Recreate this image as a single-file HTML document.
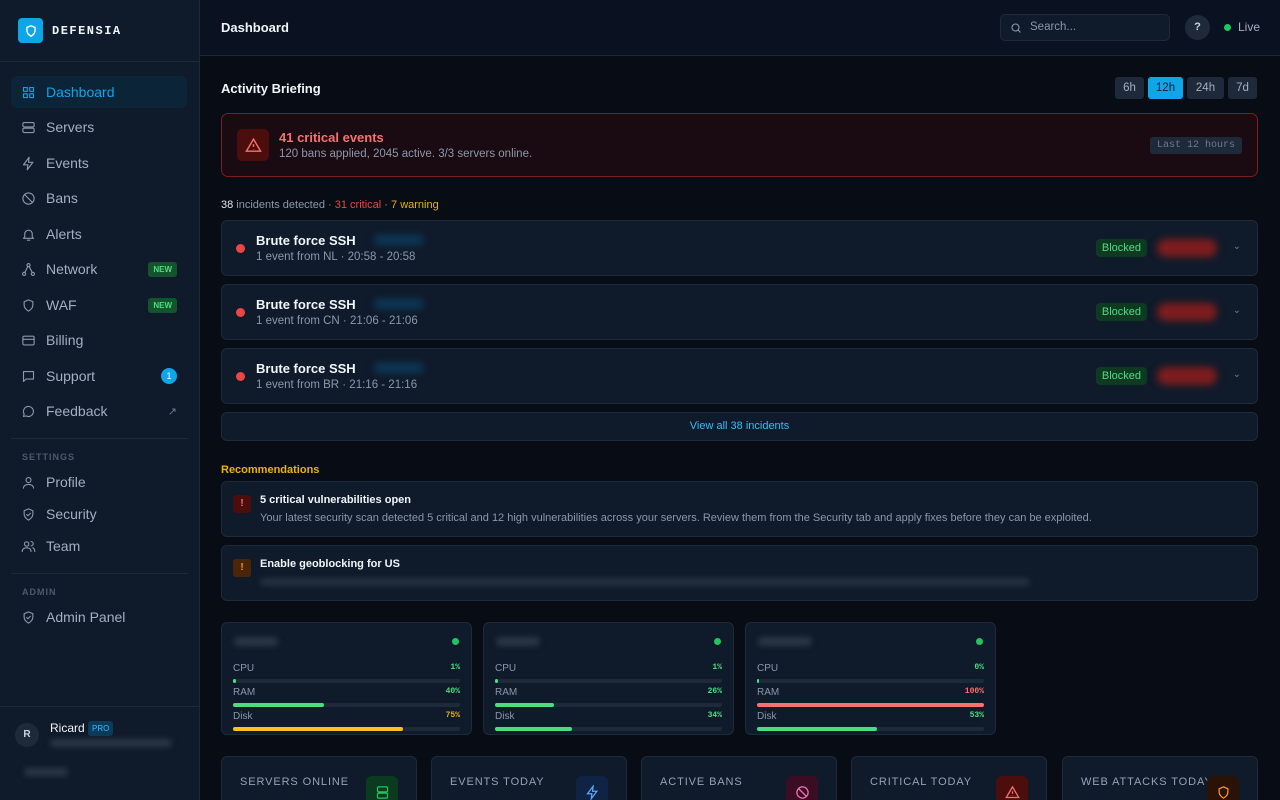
<!DOCTYPE html>
<html><head><meta charset="utf-8"><style>
*{box-sizing:border-box;margin:0;padding:0}
html{width:1280px;height:800px;overflow:hidden}
body{width:1280px;height:800px;overflow:hidden;background:#080c14;font-family:"Liberation Sans",sans-serif;color:#e5e7eb;position:relative}
.sb{position:absolute;left:0;top:0;width:200px;height:800px;background:#0f1a2a;border-right:1px solid #1c2838}
.logo{position:absolute;left:18px;top:18px;width:25px;height:25px;background:#0ea5e9;border-radius:4px;display:flex;align-items:center;justify-content:center}
.brand{position:absolute;left:52px;top:24px;font-family:"Liberation Mono",monospace;font-weight:bold;font-size:12px;letter-spacing:1.5px;color:#f1f5f9}
.hr{position:absolute;height:1px;background:#1e2a3a}
.nav{position:absolute;left:11px;width:176px;height:32px;display:flex;align-items:center;padding-left:10px;font-size:14px;color:#a3b0c2;border-radius:5px}
.nav svg{width:15px;height:15px;margin-right:10px;stroke:#8b98ab;fill:none;stroke-width:1.8;stroke-linecap:round;stroke-linejoin:round}
.nav.act{background:#0c2438;color:#0ea5e9}.nav.act svg{stroke:#0ea5e9}
.new{position:absolute;right:10px;background:#14532d;color:#4ade80;font-size:8px;font-weight:bold;padding:3px 5px;border-radius:3px}
.sec{position:absolute;left:22px;font-size:9px;letter-spacing:1px;color:#4b5a6e;font-weight:bold}
.top{position:absolute;left:200px;top:0;right:0;height:56px;border-bottom:1px solid #1c2838;background:#0a1120}
.card{position:absolute;background:#0f1a2a;border:1px solid #1e2a3a;border-radius:6px}
.inc .dot{position:absolute;left:14px;top:23px;width:9px;height:9px;border-radius:50%;background:#ef4444}
.inc b{position:absolute;left:34px;top:12px;font-size:13px;color:#f1f5f9}
.inc span.s{position:absolute;left:34px;top:30px;font-size:11.5px;color:#8b98ab}
.blk{position:absolute;right:110px;top:18px;background:#0f3a22;color:#4ade80;font-size:11px;padding:3px 6px;border-radius:4px}
.red{position:absolute;right:40px;top:18px;width:60px;height:18px;background:#7f1d1d;border-radius:9px;filter:blur(4px)}
.blu{position:absolute;left:152px;top:14px;width:50px;height:10px;background:#0c3a5a;border-radius:5px;filter:blur(4px)}
.chev{position:absolute;right:16px;top:20px;color:#6b7a8e;font-size:10px}
.bar{height:4px;background:#1e2a3a;border-radius:2px;position:relative;margin-top:3px}
.bar i{position:absolute;left:0;top:0;height:4px;border-radius:2px}
.row{display:flex;justify-content:space-between;font-size:10px;color:#8b98ab;margin-top:4px;height:13px}
.row em{font-style:normal;font-family:"Liberation Mono",monospace;font-size:8px;font-weight:bold}
.stat{position:absolute;top:756px;width:196px;height:44px;background:#0f1a2a;border:1px solid #1e2a3a;border-bottom:none;border-radius:6px 6px 0 0}
.stat span{position:absolute;left:18px;top:19px;font-size:11px;letter-spacing:0.9px;color:#94a3b8}
.stat .ic{position:absolute;right:18px;top:19px;width:32px;height:32px;border-radius:6px;display:flex;align-items:center;justify-content:center}
.blur{filter:blur(3px);background:#2a3646;border-radius:4px;position:absolute}
</style></head><body>
<div class="sb">
<div class="logo"><svg width="14" height="14" viewBox="0 0 24 24" fill="none" stroke="#fff" stroke-width="2.4"><path d="M12 3l7 3v5c0 5-3.5 8-7 10-3.5-2-7-5-7-10V6z"/></svg></div>
<div class="brand">DEFENSIA</div>
<div class="hr" style="left:0;width:199px;top:61px"></div>
<div class="nav act" style="top:76px"><svg viewBox="0 0 24 24"><rect x="4" y="4" width="6" height="6"/><rect x="14" y="4" width="6" height="6"/><rect x="4" y="14" width="6" height="6"/><rect x="14" y="14" width="6" height="6"/></svg>Dashboard</div>
<div class="nav" style="top:111px"><svg viewBox="0 0 24 24"><rect x="3" y="4" width="18" height="7" rx="2"/><rect x="3" y="13" width="18" height="7" rx="2"/></svg>Servers</div>
<div class="nav" style="top:147px"><svg viewBox="0 0 24 24"><path d="M13 2L4 14h7l-1 8 9-12h-7z"/></svg>Events</div>
<div class="nav" style="top:182px"><svg viewBox="0 0 24 24"><circle cx="12" cy="12" r="9"/><path d="M5.6 5.6l12.8 12.8"/></svg>Bans</div>
<div class="nav" style="top:218px"><svg viewBox="0 0 24 24"><path d="M6 16V11a6 6 0 0112 0v5l2 2H4z"/><path d="M10 21h4"/></svg>Alerts</div>
<div class="nav" style="top:253px"><svg viewBox="0 0 24 24"><circle cx="12" cy="5" r="2.5"/><circle cx="5" cy="19" r="2.5"/><circle cx="19" cy="19" r="2.5"/><path d="M11 7l-5 10M13 7l5 10"/></svg>Network<span class="new">NEW</span></div>
<div class="nav" style="top:289px"><svg viewBox="0 0 24 24"><path d="M12 3l7 3v5c0 5-3.5 8-7 10-3.5-2-7-5-7-10V6z"/></svg>WAF<span class="new">NEW</span></div>
<div class="nav" style="top:324px"><svg viewBox="0 0 24 24"><rect x="3" y="5" width="18" height="14" rx="2"/><path d="M3 10h18"/></svg>Billing</div>
<div class="nav" style="top:360px"><svg viewBox="0 0 24 24"><path d="M4 4h16v12H8l-4 4z"/></svg>Support<span style="position:absolute;right:10px;width:16px;height:16px;border-radius:50%;background:#0ea5e9;color:#fff;font-size:9px;text-align:center;line-height:16px">1</span></div>
<div class="nav" style="top:395px"><svg viewBox="0 0 24 24"><path d="M12 4a8 8 0 00-7 12l-1 4 4-1a8 8 0 104-15z"/></svg>Feedback<span style="position:absolute;right:10px;color:#6b7a8e;font-size:11px">↗</span></div>
<div class="hr" style="left:11px;width:177px;top:438px"></div>
<div class="sec" style="top:452px">SETTINGS</div>
<div class="nav" style="top:466px"><svg viewBox="0 0 24 24"><circle cx="12" cy="8" r="4"/><path d="M4 21c0-4 4-6 8-6s8 2 8 6"/></svg>Profile</div>
<div class="nav" style="top:498px"><svg viewBox="0 0 24 24"><path d="M12 3l7 3v5c0 5-3.5 8-7 10-3.5-2-7-5-7-10V6z"/><path d="M9 12l2 2 4-4"/></svg>Security</div>
<div class="nav" style="top:530px"><svg viewBox="0 0 24 24"><circle cx="9" cy="8" r="3.5"/><path d="M2 20c0-4 3-6 7-6s7 2 7 6M16 4a3.5 3.5 0 010 7M19 14c2 1 3 3 3 6"/></svg>Team</div>
<div class="hr" style="left:11px;width:177px;top:573px"></div>
<div class="sec" style="top:587px">ADMIN</div>
<div class="nav" style="top:601px"><svg viewBox="0 0 24 24"><path d="M12 3l7 3v5c0 5-3.5 8-7 10-3.5-2-7-5-7-10V6z"/><path d="M9 12l2 2 4-4"/></svg>Admin Panel</div>
<div class="hr" style="left:0;width:199px;top:706px"></div>
<div style="position:absolute;left:15px;top:723px;width:24px;height:24px;border-radius:50%;background:#1e2a3a;color:#cbd5e1;font-size:10px;font-weight:bold;text-align:center;line-height:24px">R</div>
<div style="position:absolute;left:50px;top:721px;font-size:12px;color:#f1f5f9">Ricard</div>
<div style="position:absolute;left:88px;top:721px;background:#0c3a5a;color:#38bdf8;font-size:8px;padding:3px 4px;border-radius:3px">PRO</div>
<div class="blur" style="left:50px;top:739px;width:122px;height:8px"></div>
<div class="blur" style="left:24px;top:768px;width:44px;height:8px"></div>
</div>
<div class="top">
<div style="position:absolute;left:21px;top:20px;font-size:13px;font-weight:bold;color:#f1f5f9">Dashboard</div>
<div style="position:absolute;left:800px;top:14px;width:170px;height:27px;border:1px solid #1e2a3a;border-radius:5px;background:#0f1a2a;font-size:11.5px;color:#8b98ab;padding:0 0 0 29px;line-height:25px"><svg style="position:absolute;left:9px;top:7px" width="12" height="12" viewBox="0 0 24 24" fill="none" stroke="#8b98ab" stroke-width="2.2"><circle cx="11" cy="11" r="7"/><path d="M16 16l5 5"/></svg>Search...</div>
<div style="position:absolute;left:985px;top:15px;width:25px;height:25px;border-radius:50%;background:#1e2a3a;color:#cbd5e1;font-size:11px;font-weight:bold;text-align:center;line-height:25px">?</div>
<div style="position:absolute;left:1024px;top:24px;width:7px;height:7px;border-radius:50%;background:#22c55e"></div>
<div style="position:absolute;left:1038px;top:20px;font-size:12px;color:#a3b0c2">Live</div>
</div>
<div style="position:absolute;left:221px;top:81px;font-size:13px;font-weight:bold;color:#f1f5f9">Activity Briefing</div>
<div style="position:absolute;left:1115px;top:77px;display:flex;gap:4px;font-size:11.5px">
<div style="width:29px;height:22px;background:#1e2a3a;color:#a3b0c2;border-radius:3px;text-align:center;line-height:22px">6h</div>
<div style="width:35px;height:22px;background:#0ea5e9;color:#062033;border-radius:3px;text-align:center;line-height:22px">12h</div>
<div style="width:37px;height:22px;background:#1e2a3a;color:#a3b0c2;border-radius:3px;text-align:center;line-height:22px">24h</div>
<div style="width:29px;height:22px;background:#1e2a3a;color:#a3b0c2;border-radius:3px;text-align:center;line-height:22px">7d</div>
</div>
<div style="position:absolute;left:221px;top:113px;width:1037px;height:64px;background:#1a0a12;border:1px solid #7f1d1d;border-radius:7px">
<div style="position:absolute;left:15px;top:15px;width:32px;height:32px;background:#4c0d0d;border-radius:5px;display:flex;align-items:center;justify-content:center"><svg width="17" height="17" viewBox="0 0 24 24" fill="none" stroke="#f87171" stroke-width="2"><path d="M12 3L2 20h20z"/><path d="M12 10v4M12 17v.5"/></svg></div>
<div style="position:absolute;left:57px;top:16px;font-size:13px;font-weight:bold;color:#f87171">41 critical events</div>
<div style="position:absolute;left:57px;top:34px;font-size:11.5px;color:#8b98ab">120 bans applied, 2045 active. 3/3 servers online.</div>
<div style="position:absolute;right:15px;top:23px;background:#1e2a3a;color:#6b7a8e;font-family:'Liberation Mono',monospace;font-size:10px;padding:3px 7px;border-radius:3px">Last 12 hours</div>
</div>
<div style="position:absolute;left:221px;top:199px;font-size:11px;color:#8b98ab"><span style="color:#e5e7eb">38</span> incidents detected · <span style="color:#ef4444">31 critical</span> · <span style="color:#eab308">7 warning</span></div>
<div class="card inc" style="left:221px;top:220px;width:1037px;height:56px"><div class="dot"></div><b>Brute force SSH</b><div class="blu"></div><span class="s">1 event from NL · 20:58 - 20:58</span><div class="blk">Blocked</div><div class="red"></div><div class="chev">⌄</div></div>
<div class="card inc" style="left:221px;top:284px;width:1037px;height:56px"><div class="dot"></div><b>Brute force SSH</b><div class="blu"></div><span class="s">1 event from CN · 21:06 - 21:06</span><div class="blk">Blocked</div><div class="red"></div><div class="chev">⌄</div></div>
<div class="card inc" style="left:221px;top:348px;width:1037px;height:56px"><div class="dot"></div><b>Brute force SSH</b><div class="blu"></div><span class="s">1 event from BR · 21:16 - 21:16</span><div class="blk">Blocked</div><div class="red"></div><div class="chev">⌄</div></div>
<div class="card" style="left:221px;top:412px;width:1037px;height:29px;text-align:center;font-size:11px;color:#38bdf8;line-height:27px">View all 38 incidents</div>
<div style="position:absolute;left:221px;top:464px;font-size:11px;font-weight:bold;color:#eab308">Recommendations</div>
<div class="card" style="left:221px;top:481px;width:1037px;height:56px">
<div style="position:absolute;left:11px;top:13px;width:18px;height:18px;background:#4c0d0d;border-radius:3px;color:#f87171;font-size:10px;text-align:center;line-height:18px;font-weight:bold">!</div>
<div style="position:absolute;left:38px;top:12px;font-size:11px;font-weight:bold;color:#f1f5f9">5 critical vulnerabilities open</div>
<div style="position:absolute;left:38px;top:30px;font-size:11px;color:#8b98ab">Your latest security scan detected 5 critical and 12 high vulnerabilities across your servers. Review them from the Security tab and apply fixes before they can be exploited.</div>
</div>
<div class="card" style="left:221px;top:545px;width:1037px;height:56px">
<div style="position:absolute;left:11px;top:13px;width:18px;height:18px;background:#4a2508;border-radius:3px;color:#f59e0b;font-size:10px;text-align:center;line-height:18px;font-weight:bold">!</div>
<div style="position:absolute;left:38px;top:12px;font-size:11px;font-weight:bold;color:#f1f5f9">Enable geoblocking for US</div>
<div class="blur" style="left:38px;top:32px;width:770px;height:8px;background:#243040"></div>
</div>
<div class="card" style="left:221px;top:622px;width:251px;height:113px;padding:0 11px">
<div class="blur" style="left:12px;top:14px;width:44px;height:9px"></div><div style="position:absolute;right:12px;top:15px;width:7px;height:7px;border-radius:50%;background:#22c55e"></div>
<div style="height:36px"></div>
<div class="row"><span>CPU</span><em style="color:#4ade80">1%</em></div><div class="bar"><i style="width:3px;background:#4ade80"></i></div>
<div class="row"><span>RAM</span><em style="color:#4ade80">40%</em></div><div class="bar"><i style="width:40%;background:#4ade80"></i></div>
<div class="row"><span>Disk</span><em style="color:#eab308">75%</em></div><div class="bar"><i style="width:75%;background:#fbbf24"></i></div>
</div>
<div class="card" style="left:483px;top:622px;width:251px;height:113px;padding:0 11px">
<div class="blur" style="left:12px;top:14px;width:44px;height:9px"></div><div style="position:absolute;right:12px;top:15px;width:7px;height:7px;border-radius:50%;background:#22c55e"></div>
<div style="height:36px"></div>
<div class="row"><span>CPU</span><em style="color:#4ade80">1%</em></div><div class="bar"><i style="width:3px;background:#4ade80"></i></div>
<div class="row"><span>RAM</span><em style="color:#4ade80">26%</em></div><div class="bar"><i style="width:26%;background:#4ade80"></i></div>
<div class="row"><span>Disk</span><em style="color:#4ade80">34%</em></div><div class="bar"><i style="width:34%;background:#4ade80"></i></div>
</div>
<div class="card" style="left:745px;top:622px;width:251px;height:113px;padding:0 11px">
<div class="blur" style="left:12px;top:14px;width:54px;height:9px"></div><div style="position:absolute;right:12px;top:15px;width:7px;height:7px;border-radius:50%;background:#22c55e"></div>
<div style="height:36px"></div>
<div class="row"><span>CPU</span><em style="color:#4ade80">0%</em></div><div class="bar"><i style="width:2px;background:#4ade80"></i></div>
<div class="row"><span>RAM</span><em style="color:#f87171">100%</em></div><div class="bar"><i style="width:100%;background:#f87171"></i></div>
<div class="row"><span>Disk</span><em style="color:#4ade80">53%</em></div><div class="bar"><i style="width:53%;background:#4ade80"></i></div>
</div>
<div class="stat" style="left:221px"><span>SERVERS ONLINE</span><div class="ic" style="background:#0c3a1e"><svg width="15" height="15" viewBox="0 0 24 24" fill="none" stroke="#22c55e" stroke-width="2"><rect x="4" y="3" width="16" height="8" rx="2"/><rect x="4" y="13" width="16" height="8" rx="2"/></svg></div></div>
<div class="stat" style="left:431px"><span>EVENTS TODAY</span><div class="ic" style="background:#0f2444"><svg width="15" height="15" viewBox="0 0 24 24" fill="none" stroke="#60a5fa" stroke-width="2"><path d="M13 2L4 14h7l-1 8 9-12h-7z"/></svg></div></div>
<div class="stat" style="left:641px"><span>ACTIVE BANS</span><div class="ic" style="background:#3a0d22"><svg width="15" height="15" viewBox="0 0 24 24" fill="none" stroke="#f472b6" stroke-width="2"><circle cx="12" cy="12" r="9"/><path d="M5.6 5.6l12.8 12.8"/></svg></div></div>
<div class="stat" style="left:851px"><span>CRITICAL TODAY</span><div class="ic" style="background:#4c0d0d"><svg width="15" height="15" viewBox="0 0 24 24" fill="none" stroke="#f87171" stroke-width="2"><path d="M12 3L2 20h20z"/><path d="M12 10v4M12 17v.5"/></svg></div></div>
<div class="stat" style="left:1062px"><span>WEB ATTACKS TODAY</span><div class="ic" style="background:#2a1306"><svg width="15" height="15" viewBox="0 0 24 24" fill="none" stroke="#fb923c" stroke-width="2"><path d="M12 3l7 3v5c0 5-3.5 8-7 10-3.5-2-7-5-7-10V6z"/></svg></div></div>
</body></html>
